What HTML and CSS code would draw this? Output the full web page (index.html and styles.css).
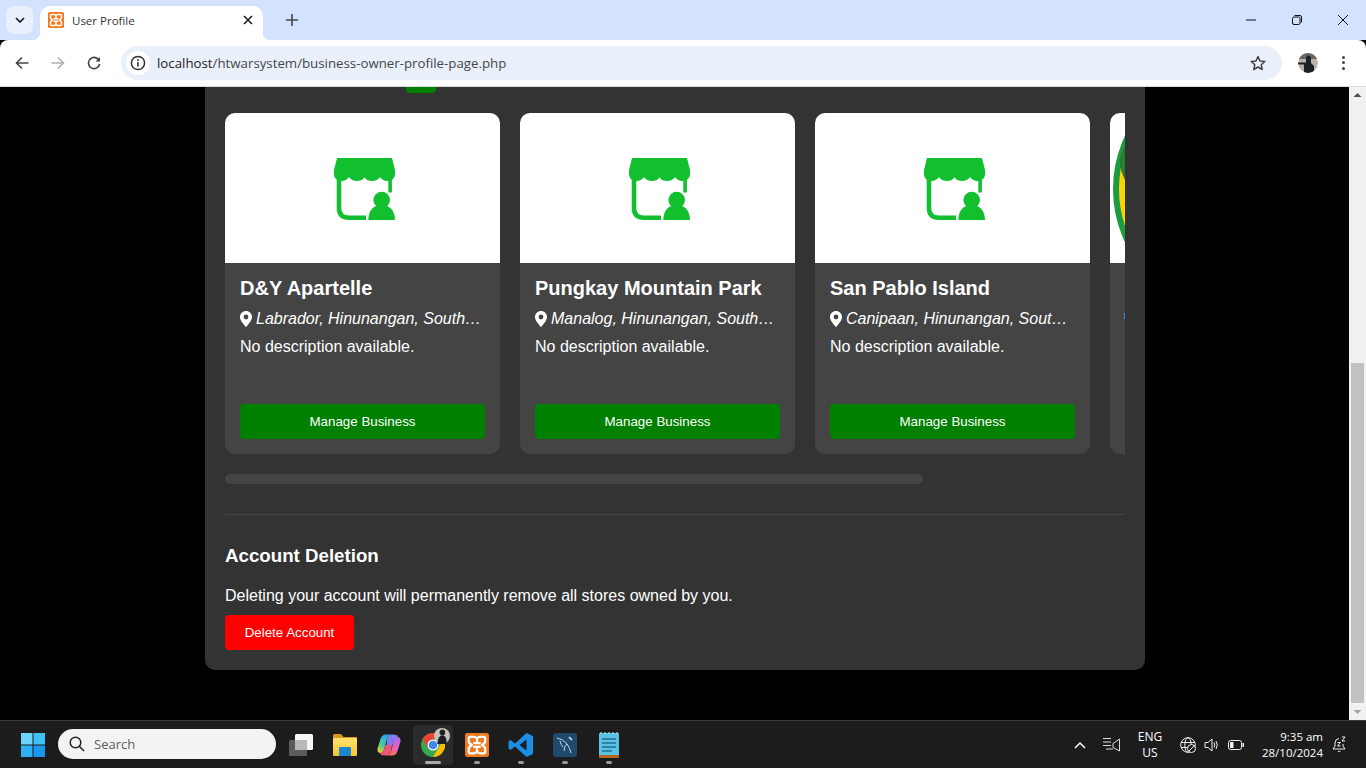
FILE: index.html
```html
<!DOCTYPE html>
<html lang="en">
<head>
<meta charset="utf-8">
<title>User Profile</title>
<link rel="stylesheet" href="styles.css">
</head>
<body>
<svg class="defs" width="0" height="0" aria-hidden="true">
  <defs>
    <linearGradient id="copilot-a" x1="0.7" y1="0" x2="0.2" y2="1"><stop offset="0" stop-color="#2aa5f0"/><stop offset="0.55" stop-color="#3fc9a0"/><stop offset="1" stop-color="#f5d020"/></linearGradient>
    <linearGradient id="copilot-b" x1="0.7" y1="0" x2="0.2" y2="1"><stop offset="0" stop-color="#b06ae8"/><stop offset="0.55" stop-color="#ec5fb8"/><stop offset="1" stop-color="#f57a3c"/></linearGradient>
    <linearGradient id="folder-body" x1="0" y1="0" x2="0" y2="1"><stop offset="0" stop-color="#ffe071"/><stop offset="1" stop-color="#f7c52b"/></linearGradient>
  </defs>
  <symbol id="store" viewBox="0 0 61 62">
    <path d="M3 0H58L61 12V16C61 20 58 23 54 23C50 23 47 21 46 19C44 22 41 23 38 23C35 23 32 22 30.5 19C29 22 26 23 23 23C20 23 17 22 15 19C14 21 11 23 7 23C3 23 0 20 0 16V12Z"/>
    <path d="M5 20V50Q5 59.7 15 59.7H32" fill="none" stroke="currentColor" stroke-width="4.6"/>
    <rect x="54.3" y="20" width="3.6" height="14.5"/>
    <circle cx="47.7" cy="42" r="8.3"/>
    <path d="M34.3 62C34.3 52 40 47 47.7 47C55 47 61 52 61 62Z"/>
  </symbol>
  <symbol id="pin" viewBox="0 0 12 16">
    <path fill-rule="evenodd" d="M6 0C2.7 0 0 2.6 0 5.9C0 9.6 4 13.6 6 16C8 13.6 12 9.6 12 5.9C12 2.6 9.3 0 6 0ZM6 3.6A2.4 2.4 0 1 1 6 8.4A2.4 2.4 0 1 1 6 3.6Z"/>
  </symbol>
  <symbol id="xampp" viewBox="0 0 16 16">
    <rect width="16" height="16" rx="1.5" fill="#ef7a1f"/>
    <path d="M3.500 2.500H6Q7.200 2.500 8 3.700Q8.800 2.500 10 2.500H12.500Q13.500 2.500 13.500 3.500V5.500Q13.500 6.800 11.300 8Q13.500 9.200 13.500 10.500V12.500Q13.500 13.500 12.500 13.500H10Q8.800 13.500 8 12.300Q7.200 13.500 6 13.500H3.500Q2.500 13.500 2.500 12.500V10.500Q2.500 9.200 4.700 8Q2.500 6.800 2.500 5.500V3.500Q2.500 2.500 3.500 2.500Z" fill="none" stroke="#fff" stroke-width="1.500" stroke-linejoin="round"/>
    <path d="M5.500 6.800H10.500M5.500 9.200H10.500M8 3.700V6.800M8 9.200V12.300" fill="none" stroke="#fff" stroke-width="1.500"/>
  </symbol>
</svg>

<header class="browser">
  <div class="tabstrip">
    <button class="tab-list"><svg width="10" height="6" viewBox="0 0 10 6"><path d="M1 1L5 5L9 1" fill="none" stroke="#1f1f1f" stroke-width="1.7"/></svg></button>
    <div class="tab">
      <svg class="tab__icon" width="16" height="16"><use href="#xampp"/></svg>
      <span class="tab__title">User Profile</span>
      <svg class="tab__close" width="10" height="10" viewBox="0 0 10 10"><path d="M1 1L9 9M9 1L1 9" stroke="#1f1f1f" stroke-width="1.6"/></svg>
    </div>
    <svg class="new-tab" width="12" height="12" viewBox="0 0 12 12"><path d="M6 0V12M0 6H12" stroke="#444" stroke-width="1.6"/></svg>
    <div class="window-controls">
      <span class="window-control"><svg width="10" height="10" viewBox="0 0 10 10"><path d="M0 5H10" stroke="#111" stroke-width="1"/></svg></span>
      <span class="window-control"><svg width="10" height="10" viewBox="0 0 10 10"><rect x=".5" y="2" width="7.5" height="7.5" rx="1.5" fill="none" stroke="#111"/><path d="M2.5 .5H8Q9.5 .5 9.5 2V7.5" fill="none" stroke="#111"/></svg></span>
      <span class="window-control"><svg width="10" height="10" viewBox="0 0 10 10"><path d="M0 0L10 10M10 0L0 10" stroke="#111" stroke-width="1"/></svg></span>
    </div>
  </div>
  <div class="toolbar">
    <span class="tool"><svg width="14" height="14" viewBox="0 0 14 14"><path d="M13.500 7H1.500M7 1.500L1.500 7L7 12.500" fill="none" stroke="#444" stroke-width="1.6"/></svg></span>
    <span class="tool"><svg width="14" height="14" viewBox="0 0 14 14"><path d="M.5 7H12.500M7 1.500L12.500 7L7 12.500" fill="none" stroke="#b0b0b0" stroke-width="1.600"/></svg></span>
    <span class="tool"><svg width="14" height="14" viewBox="0 0 14 14"><path d="M12.300 5A5.600 5.600 0 1 0 12.600 8" fill="none" stroke="#444" stroke-width="1.600"/><path d="M13 1V5.500H8.500Z" fill="#444"/></svg></span>
    <div class="omnibox">
      <span class="omnibox__info"><svg width="16" height="16" viewBox="0 0 16 16"><circle cx="8" cy="8" r="6.600" fill="none" stroke="#333" stroke-width="1.500"/><path d="M8 7V11.500M8 4.300V5.900" stroke="#333" stroke-width="1.600"/></svg></span>
      <span class="omnibox__url"><span class="omnibox__host">localhost</span>/htwarsystem/business-owner-profile-page.php</span>
      <svg class="omnibox__star" width="16" height="16" viewBox="0 0 16 16"><path d="M8 1.500L10 6L14.800 6.500L11.200 9.700L12.200 14.500L8 12L3.800 14.500L4.800 9.700L1.200 6.500L6 6Z" fill="none" stroke="#444" stroke-width="1.500" stroke-linejoin="round"/></svg>
    </div>
    <span class="avatar"><svg width="20" height="20" viewBox="0 0 20 20"><circle cx="10" cy="10" r="10" fill="#b9b0a6"/><path d="M0 6H20V0H0Z" fill="#6b635c"/><path d="M0 9.500H8V6Q8 2.500 10.500 2.500Q13 2.500 13 6V10L16 13V20H6V11.500H0Z" fill="#1b2128"/></svg></span>
    <span class="kebab"><i></i><i></i><i></i></span>
  </div>
</header>

<div class="viewport">
  <main class="page">
    <section class="panel">
      <div class="stub"></div>
      <div class="cards">
        <article class="card">
          <div class="card__image"><svg class="store-icon" width="61" height="62"><use href="#store"/></svg></div>
          <div class="card__body">
            <h3 class="card__title">D&amp;Y Apartelle</h3>
            <p class="card__location"><svg class="pin" width="12" height="16"><use href="#pin"/></svg><em class="card__place">Labrador, Hinunangan, Southern Leyte</em></p>
            <p class="card__desc">No description available.</p>
            <a class="card__button">Manage Business</a>
          </div>
        </article>
        <article class="card">
          <div class="card__image"><svg class="store-icon" width="61" height="62"><use href="#store"/></svg></div>
          <div class="card__body">
            <h3 class="card__title">Pungkay Mountain Park</h3>
            <p class="card__location"><svg class="pin" width="12" height="16"><use href="#pin"/></svg><em class="card__place">Manalog, Hinunangan, Southern Leyte</em></p>
            <p class="card__desc">No description available.</p>
            <a class="card__button">Manage Business</a>
          </div>
        </article>
        <article class="card">
          <div class="card__image"><svg class="store-icon" width="61" height="62"><use href="#store"/></svg></div>
          <div class="card__body">
            <h3 class="card__title">San Pablo Island</h3>
            <p class="card__location"><svg class="pin" width="12" height="16"><use href="#pin"/></svg><em class="card__place">Canipaan, Hinunangan, Southern Leyte</em></p>
            <p class="card__desc">No description available.</p>
            <a class="card__button">Manage Business</a>
          </div>
        </article>
        <article class="card card--peek">
          <div class="card__image"><svg width="15" height="150" viewBox="0 0 15 150"><circle cx="127" cy="76" r="121" fill="#f7d40a" stroke="#1d9b3f" stroke-width="6"/><path d="M15 66Q6 50 15 34Z" fill="#1a8a3a" stroke="#5b4a1a" stroke-width=".6"/></svg></div>
          <div class="card__body"><span class="card__sliver"></span></div>
        </article>
      </div>
      <div class="cards-scroll"></div>
      <hr class="divider">
      <h2 class="danger__title">Account Deletion</h2>
      <p class="danger__text">Deleting your account will permanently remove all stores owned by you.</p>
      <button class="danger__button">Delete Account</button>
    </section>
  </main>
  <div class="scrollbar">
    <svg width="17" height="16" viewBox="0 0 17 16"><path d="M4.500 10L8.500 6L12.500 10Z" fill="#505050"/></svg>
    <div class="scrollbar__track"><div class="scrollbar__thumb"></div></div>
    <svg width="17" height="16" viewBox="0 0 17 16"><path d="M4.500 6L8.500 10L12.500 6Z" fill="#a3a3a3"/></svg>
  </div>
</div>

<footer class="taskbar">
  <span class="start"><svg width="24" height="24" viewBox="0 0 24 24"><rect width="11.500" height="11.500" fill="#6bd6fc"/><rect x="12.500" width="11.500" height="11.500" fill="#3fc0f6"/><rect y="12.500" width="11.500" height="11.500" fill="#2fb0f2"/><rect x="12.500" y="12.500" width="11.500" height="11.500" fill="#1c96ea"/></svg></span>
  <div class="search"><svg width="16" height="16" viewBox="0 0 16 16"><circle cx="6.500" cy="6.500" r="5.300" fill="none" stroke="#222" stroke-width="1.500"/><path d="M10.500 10.500L15 15" stroke="#222" stroke-width="1.600"/></svg><span>Search</span></div>
  <div class="apps">
    <span class="app"><svg width="24" height="22" viewBox="0 0 24 22"><rect x="0" y="6" width="18" height="16" rx="1.500" fill="#5c5c5c"/><rect x="6" y="0" width="18" height="16" rx="1.500" fill="#f6f6f6"/><rect x="6" y="6" width="12" height="10" fill="#b8b8b8"/></svg></span>
    <span class="app"><svg width="24" height="22" viewBox="0 0 24 22"><path d="M0 1.500Q0 0 1.500 0H8L10.500 3H24V21H0Z" fill="#d9981a"/><rect y="4" width="24" height="18" rx="1" fill="url(#folder-body)"/><rect x="6" y="13" width="12" height="9" rx="1" fill="#1a86d0"/></svg></span>
    <span class="app"><svg width="24" height="24" viewBox="0 0 24 24"><path d="M8.500 1.500H13Q11 2.500 10 5.500L7.500 15Q6.500 20 3 20Q0 19.500 .5 15.500L3.500 6Q5 1.500 8.500 1.500Z" fill="url(#copilot-a)"/><path d="M15.500 22.500H11Q13 21.500 14 18.500L16.500 9Q17.500 4 21 4Q24 4.500 23.500 8.500L20.500 18Q19 22.500 15.500 22.500Z" fill="url(#copilot-b)"/><path d="M13 1.500H16Q21 1.500 21 4Q18 4 16.500 9L15.500 12H9.500L10 5.500Q11 2.500 13 1.500Z" fill="#7f7cf0"/><path d="M8 22.500H11Q13 21.500 14 18.500L15 12H8.500L7.500 15Q6.500 20 3 20Q3.500 22.500 8 22.500Z" fill="#f0567a"/></svg></span>
    <span class="app app--active"><svg class="chrome" width="24" height="24" viewBox="0 0 24 24"><circle cx="12" cy="12" r="12" fill="#34a853"/><path d="M12 0A12 12 0 0 1 22.400 6H12L6.800 15L1.600 6A12 12 0 0 1 12 0Z" fill="#ea4335"/><path d="M22.400 6A12 12 0 0 1 12 24L17.200 15L22.400 6Z" fill="#fbbc04"/><circle cx="12" cy="12" r="5.500" fill="#fff"/><circle cx="12" cy="12" r="4.300" fill="#4285f4"/></svg><svg class="chrome__badge" width="16" height="16" viewBox="0 0 20 20"><circle cx="10" cy="10" r="10" fill="#c9c0b6"/><circle cx="10.500" cy="5.500" r="3.500" fill="#1b2128"/><path d="M4 20Q5 9 10.500 9Q16 9 16 20Z" fill="#1b2128"/></svg></span>
    <span class="app"><svg width="24" height="24"><use href="#xampp"/></svg></span>
    <span class="app"><svg width="26" height="26" viewBox="0 0 26 26"><path d="M18.500 1L25 4V22L18.500 25L7 14.500L2.500 18L.5 16.500V9.500L2.500 8L7 11.500ZM18.500 7.500L11.500 13L18.500 18.500Z" fill="#1a8fe3" fill-rule="evenodd"/></svg></span>
    <span class="app"><svg width="24" height="24" viewBox="0 0 24 24"><rect width="24" height="24" rx="3" fill="#1f4a6e"/><path d="M4 5Q10 6 14 11Q17 15 18 20M14 11Q11 13 11 18M7 8Q8 12 10 14" fill="none" stroke="#c4d6e5" stroke-width="1"/><path d="M16 4L19 7" stroke="#dfe9f1" stroke-width="1.500"/></svg></span>
    <span class="app"><svg width="20" height="26" viewBox="0 0 20 26"><rect y="1" width="20" height="23" rx="1" fill="#5ac3e3"/><rect y="23" width="20" height="3" fill="#b5651d"/><path d="M3 7H17M3 11H17M3 15H17M3 19H13" stroke="#1e6f8e" stroke-width="1.500"/><path d="M2 0V2M6 0V2M10 0V2M14 0V2M18 0V2" stroke="#cfeaf3"/></svg></span>
  </div>
  <div class="tray">
    <svg class="tray__chevron" width="12" height="8" viewBox="0 0 12 8"><path d="M1 7L6 2L11 7" fill="none" stroke="#fff" stroke-width="1.500"/></svg>
    <svg class="tray__meet" width="18" height="16" viewBox="0 0 18 16"><path d="M0 1.500H8M0 5H8M0 8.500H8" stroke="#ddd"/><path d="M10 6.500L16.500 2V14L10 10.500V6.500Z" fill="none" stroke="#ddd"/><path d="M3 12H10" stroke="#ddd"/></svg>
    <div class="tray__lang"><span>ENG</span><span>US</span></div>
    <svg class="tray__globe" width="16" height="16" viewBox="0 0 16 16"><g fill="none" stroke="#eee" stroke-width="1"><circle cx="8" cy="8" r="7.300"/><ellipse cx="8" cy="8" rx="3.200" ry="7.300"/><path d="M1 5.500H15M1 10.500H15"/></g><circle cx="11.500" cy="11.500" r="4" fill="#1c1c1c" stroke="#eee"/><path d="M9 14L14 9" stroke="#eee"/></svg>
    <svg class="tray__sound" width="16" height="16" viewBox="0 0 16 16"><path d="M1 5.500H4L8 2V14L4 10.500H1Z" fill="none" stroke="#eee"/><path d="M10 5.500Q11.500 8 10 10.500M12 4Q14.500 8 12 12" fill="none" stroke="#eee"/></svg>
    <svg class="tray__battery" width="16" height="10" viewBox="0 0 16 10"><rect x=".5" y=".5" width="13" height="9" rx="2" fill="none" stroke="#eee"/><rect x="2" y="2" width="3.500" height="6" fill="#eee"/><rect x="14.500" y="3" width="1.500" height="4" fill="#eee"/></svg>
    <div class="tray__clock"><span>9:35 am</span><span>28/10/2024</span></div>
    <svg class="tray__bell" width="16" height="18" viewBox="0 0 16 18"><path d="M7 2.500Q3 3 3 7V10L1 13H13L11 10V8M6 15Q7 16.500 8.500 15" fill="none" stroke="#eee"/><path d="M10 1H13L10 5H13M5.500 6.500H8.500L5.500 10H8.500" fill="none" stroke="#eee"/></svg>
  </div>
</footer>
</body>
</html>
```
FILE: styles.css
```css
* { box-sizing: border-box; }
html, body { margin: 0; height: 100%; }
body {
  width: 1366px;
  height: 768px;
  overflow: hidden;
  display: flex;
  flex-direction: column;
  background: #000;
  font-family: "Liberation Sans", Arial, sans-serif;
  color: #fff;
}
.defs { display: block; height: 0; }

/* browser chrome */
.browser { flex: none; height: 87px; color: #1f1f1f; font-family: "Open Sans", "Noto Sans", sans-serif; }
.tabstrip { height: 40px; background: #d3e3fd; display: flex; align-items: flex-end; padding-left: 6px; }
.tab-list { width: 27px; height: 28px; margin: 0 7px 6px 0; padding: 0; border: 0; border-radius: 8px; background: #e9f0fc; display: flex; align-items: center; justify-content: center; }
.tab { position: relative; width: 223px; height: 34px; background: #fff; border-radius: 10px 10px 0 0; display: flex; align-items: center; padding: 0 10px 6px 8px; }
.tab::before, .tab::after { content: ""; position: absolute; bottom: 0; width: 8px; height: 8px; }
.tab::before { left: -8px; background: radial-gradient(circle at 0 0, transparent 8px, #fff 8.5px); }
.tab::after { right: -8px; background: radial-gradient(circle at 100% 0, transparent 8px, #fff 8.5px); }
.tab__icon { flex: none; }
.tab__title { flex: 1; margin-left: 8px; font-size: 11.5px; color: #333; }
.tab__close { flex: none; margin-right: 0; }
.new-tab { margin: 0 0 14px 23px; }
.window-controls { margin-left: auto; display: flex; height: 40px; }
.window-control { width: 46px; display: flex; align-items: center; justify-content: center; }

.toolbar { height: 47px; background: #fff; border-bottom: 1px solid #dcdcdc; border-radius: 8px 8px 0 0; display: flex; align-items: center; padding: 0 4px 1px 4px; }
.tool { flex: none; width: 36px; height: 36px; display: flex; align-items: center; justify-content: center; }
.omnibox { flex: none; width: 1161px; height: 34px; margin-left: 9px; border-radius: 17px; background: #eaf0f9; display: flex; align-items: center; padding: 0 16px 0 5px; font-size: 13.27px; color: #44474a; }
.omnibox__info { flex: none; width: 24px; height: 24px; border-radius: 50%; background: #fff; display: flex; align-items: center; justify-content: center; }
.omnibox__url { margin-left: 7px; flex: 1; white-space: nowrap; }
.omnibox__host { color: #1f1f1f; }
.omnibox__star { flex: none; }
.avatar { flex: none; width: 20px; height: 20px; margin-left: 16px; border-radius: 50%; overflow: hidden; display: block; }
.avatar svg { display: block; }
.kebab { flex: none; margin-left: 24px; display: flex; flex-direction: column; gap: 2.5px; }
.kebab i { width: 3px; height: 3px; border-radius: 50%; background: #444; display: block; }

/* page */
.viewport { flex: none; height: 633px; display: flex; }
.page { flex: 1; min-width: 0; padding-left: 1px; display: flex; justify-content: center; align-items: flex-start; }
.panel { width: 940px; height: 583px; padding: 0 20px 20px; background: #333; border-radius: 0 0 10px 10px; }
.stub { width: 30px; height: 6px; margin: 0 0 20px 181px; background: #008000; border-radius: 0 0 4px 4px; }
.cards { display: flex; gap: 20px; overflow: hidden; height: 341px; }
.card { flex: none; width: 275px; height: 341px; background: #444; border-radius: 10px; overflow: hidden; display: flex; flex-direction: column; }
.card__image { flex: none; height: 150px; background: #fff; display: flex; align-items: center; justify-content: center; }
.store-icon { display: block; color: #11bf2f; fill: #11bf2f; margin-left: 4px; margin-top: 2px; }
.card__body { flex: 1; min-height: 0; padding: 14px 15px 15px; display: flex; flex-direction: column; }
.card__title { margin: 0 0 10px; font-size: 20px; line-height: 23px; font-weight: 700; white-space: nowrap; }
.card__location { margin: 0 0 10px; height: 18px; display: flex; align-items: center; gap: 4px; font-size: 16px; line-height: 18px; }
.pin { flex: none; fill: #fff; }
.card__place { min-width: 0; overflow: hidden; white-space: nowrap; text-overflow: ellipsis; }
.card__desc { margin: 0; font-size: 16px; line-height: 18px; }
.card__button { margin-top: auto; height: 35px; padding-bottom: 1px; border-radius: 4px; background: #008000; color: #fff; font-size: 13.333px; display: flex; align-items: center; justify-content: center; }
.card--peek .card__image { justify-content: flex-start; }
.card--peek .card__image svg { display: block; }
.card--peek .card__body { padding: 0; }
.card__sliver { display: block; width: 1px; height: 6px; margin: 50px 0 0 14px; background: #3f8fe0; }
.cards-scroll { width: 698px; height: 10px; margin-top: 20px; background: #444; border-radius: 5px; }
.divider { height: 1px; margin: 30px 0 29px; border: 0; background: #444; }
.danger__title { margin: 0 0 20px; font-size: 18.72px; line-height: 23px; font-weight: 700; }
.danger__text { margin: 0 0 10px; font-size: 16px; line-height: 18px; }
.danger__button { display: block; width: 129px; height: 35px; padding: 0; border: 0; border-radius: 4px; background: #f00; color: #fff; font: 13.333px "Liberation Sans", Arial, sans-serif; }

.scrollbar { flex: none; width: 17px; background: #f1f1f1; display: flex; flex-direction: column; }
.scrollbar svg { flex: none; display: block; }
.scrollbar__track { flex: 1; }
.scrollbar__thumb { margin: 260px 2px 0; height: 340px; background: #c1c1c1; }

/* taskbar */
.taskbar { flex: none; height: 48px; background: #1c1c1c; border-top: 1px solid #3a3a3a; display: flex; align-items: center; font-family: "Open Sans", "Noto Sans", sans-serif; }
.start { flex: none; width: 24px; height: 24px; margin-left: 21px; display: block; }
.start svg { display: block; }
.search { flex: none; width: 218px; height: 30px; margin: 0 0 1px 13px; border-radius: 15px; background: #f3f3f3; display: flex; align-items: center; gap: 9px; padding-left: 11px; color: #5d5d5d; font-size: 13px; }
.apps { flex: none; margin-left: 3px; display: flex; }
.app { position: relative; width: 44px; height: 40px; display: flex; align-items: center; justify-content: center; }
.app > svg { position: relative; }
.app::after { content: ""; position: absolute; left: 19px; bottom: 1px; width: 6px; height: 3px; border-radius: 2px; background: #9a9a9a; }
.app:nth-child(-n+3)::after { display: none; }
.app--active::before { content: ""; position: absolute; inset: 0 2px; background: #2b2b2b; border-radius: 4px; }
.app--active::after { left: 14px; width: 16px; background: #aaa; }
.app > .chrome__badge { position: absolute; left: 23px; top: 3px; }
.tray { flex: none; margin-left: auto; display: flex; align-items: center; color: #fff; font-size: 12px; }
.tray__chevron { margin-right: 17px; }
.tray__lang { width: 34px; margin-left: 12px; display: flex; flex-direction: column; align-items: center; line-height: 16px; font-size: 12px; }
.tray__globe { margin-left: 13px; }
.tray__sound { margin-left: 8px; }
.tray__battery { margin-left: 8px; }
.tray__clock { width: 76px; margin-left: 3px; display: flex; flex-direction: column; align-items: flex-end; line-height: 16px; font-size: 11.500px; }
.tray__bell { margin: 0 18px 0 9px; }
```
